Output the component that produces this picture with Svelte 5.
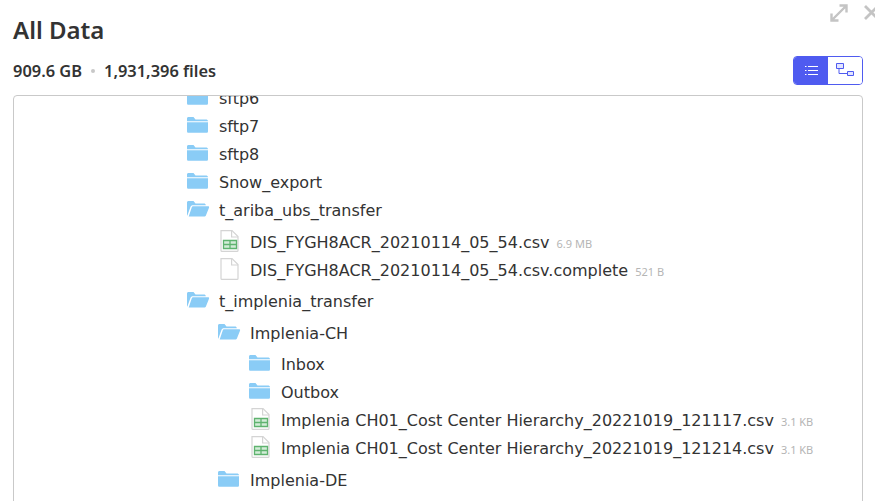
<script>
	const tree = [
		{ name: 'sftp6', type: 'folder' },
		{ name: 'sftp7', type: 'folder' },
		{ name: 'sftp8', type: 'folder' },
		{ name: 'Snow_export', type: 'folder' },
		{
			name: 't_ariba_ubs_transfer',
			type: 'open',
			children: [
				{ name: 'DIS_FYGH8ACR_20210114_05_54.csv', type: 'csv', size: '6.9 MB' },
				{ name: 'DIS_FYGH8ACR_20210114_05_54.csv.complete', type: 'file', size: '521 B' }
			]
		},
		{
			name: 't_implenia_transfer',
			type: 'open',
			children: [
				{
					name: 'Implenia-CH',
					type: 'open',
					children: [
						{ name: 'Inbox', type: 'folder' },
						{ name: 'Outbox', type: 'folder' },
						{ name: 'Implenia CH01_Cost Center Hierarchy_20221019_121117.csv', type: 'csv', size: '3.1 KB' },
						{ name: 'Implenia CH01_Cost Center Hierarchy_20221019_121214.csv', type: 'csv', size: '3.1 KB' }
					]
				},
				{ name: 'Implenia-DE', type: 'folder' }
			]
		}
	]
</script>

{#snippet icon(type)}
	{#if type === 'folder'}
		<svg class="ic" width="22" height="18" viewBox="0 0 22 18">
			<path fill="#8accf6" d="M1 1.500C1 .6 1.600 0 2.500 0H7.500L9.500 2.500H20C21 2.500 22 3 22 4.200H1Z" />
			<path fill="#8accf6" d="M1 5.300H22V14.200C22 15.200 21.400 15.800 20.500 15.800H2.500C1.600 15.800 1 15.200 1 14.200Z" />
		</svg>
	{:else if type === 'open'}
		<svg class="ic open" width="24" height="18" viewBox="0 0 24 18">
			<path fill="#8accf6" d="M1 1.500C1 .6 1.600 0 2.500 0H7.500L9.500 2.500H18C19 2.500 19.800 3 19.800 4.200H7C5.600 4.200 4.900 4.800 4.500 5.800L1.300 14.800C1.100 14.500 1 14.200 1 13.800Z" />
			<path fill="#8accf6" d="M5.800 6.300C6.100 5.600 6.500 5.300 7.300 5.300H22C23 5.300 23.400 5.900 23 6.700L20 14.200C19.600 15.200 19 15.600 18 15.600H2.700Z" />
		</svg>
	{:else}
		<svg class="ic" width="22" height="24" viewBox="0 0 22 24">
			<path fill="#fff" stroke="#d4d4d4" stroke-width="1.200" d="M4 .6H15L21 6.600V20.500C21 21 20.600 21.400 20 21.400H5C4.400 21.400 4 21 4 20.500Z" />
			<path fill="none" stroke="#d4d4d4" stroke-width="1.200" d="M14.600 .6V7H21" />
			{#if type === 'csv'}
				<path fill="#d3ecd8" stroke="#5fb36f" stroke-width="1.300" d="M6.500 10.500H19.500V18.500H6.500Z" />
				<path fill="none" stroke="#5fb36f" stroke-width="1.300" d="M13 10.500V18.500M6.500 14.500H19.500" />
			{/if}
		</svg>
	{/if}
{/snippet}

{#snippet nodes(items)}
	<ul>
		{#each items as item}
			<li>
				<div class="row">
					{@render icon(item.type)}
					<span class="name">{item.name}</span>
					{#if item.size}<span class="size">{item.size}</span>{/if}
				</div>
				{#if item.children}
					<div class="children">{@render nodes(item.children)}</div>
				{/if}
			</li>
		{/each}
	</ul>
{/snippet}

<div class="page">
	<div class="window-actions">
		<svg width="20" height="20" viewBox="0 0 20 20">
			<path fill="none" stroke="#c4c4c4" stroke-width="2.400" d="M2.500 17.500L17.500 2.500M10.500 2.500H17.500V9.500M2.500 10.500V17.500H9.500" />
		</svg>
		<svg width="16" height="20" viewBox="0 0 16 20">
			<path fill="none" stroke="#c4c4c4" stroke-width="2.800" d="M2 3L15 16M15 3L2 16" />
		</svg>
	</div>

	<h1>All Data</h1>

	<div class="summary">
		<div class="stats">
			<span>909.6 GB</span>
			<i class="dot"></i>
			<span>1,931,396 files</span>
		</div>
		<div class="toggle">
			<button class="active" aria-label="List view">
				<svg width="13" height="12" viewBox="0 0 13 12">
					<path fill="#fff" d="M0 1H1.500V2H0ZM3 1H13V2H3ZM0 5H1.500V6H0ZM3 5H13V6H3ZM0 9H1.500V10H0ZM3 9H13V10H3Z" />
				</svg>
			</button>
			<button aria-label="Tree view">
				<svg width="18" height="15" viewBox="0 0 18 15">
					<path fill="#e3e5ff" stroke="#4f5bf0" d="M0.500 0.500H7.500V5.500H0.500ZM11.500 8.500H17.500V12.500H11.500Z" />
					<path fill="none" stroke="#4f5bf0" d="M3 5.500V10.500H11.500" />
				</svg>
			</button>
		</div>
	</div>

	<div class="browser">
		<div class="tree">{@render nodes(tree)}</div>
	</div>
</div>

<style>
	:global(body) {
		overflow: hidden;
		background: #fff;
	}

	.page {
		position: relative;
		height: 501px;
		padding: 15px 12px 0 13px;
		box-sizing: border-box;
		overflow: hidden;
		font-family: "Noto Sans", sans-serif;
		color: #333;
	}

	.window-actions {
		position: absolute;
		top: 3px;
		right: -4px;
		display: flex;
		gap: 14px;
	}

	h1 {
		margin: 0;
		font-size: 24px;
		line-height: 30px;
		font-weight: 600;
	}

	.summary {
		display: flex;
		justify-content: space-between;
		align-items: center;
		margin-top: 11px;
		height: 29px;
	}

	.stats {
		display: flex;
		align-items: center;
		gap: 9px;
		font-size: 16.4px;
		font-weight: 600;
	}

	.dot {
		width: 4px;
		height: 4px;
		border-radius: 50%;
		background: #c8c8c8;
	}

	.toggle {
		display: flex;
		width: 70px;
		height: 29px;
		box-sizing: border-box;
		border: 1px solid #4f5bf0;
		border-radius: 4px;
		overflow: hidden;
	}

	.toggle button {
		flex: 1;
		display: flex;
		align-items: center;
		justify-content: center;
		padding: 0;
		border: none;
		background: #fff;
	}

	.toggle button.active {
		background: #4f5bf0;
	}

	.browser {
		margin-top: 10px;
		height: 420px;
		box-sizing: border-box;
		border: 1px solid #c9c9c9;
		border-radius: 4px;
		overflow: hidden;
	}

	.tree {
		margin-top: -12px;
		padding-left: 172px;
	}

	ul {
		list-style: none;
		margin: 0;
		padding: 0;
	}

	.row {
		display: flex;
		align-items: center;
		gap: 11px;
		height: 28px;
		white-space: nowrap;
		font-size: 16px;
		font-family: "DejaVu Sans", sans-serif;
	}

	.ic {
		flex: none;
	}

	.ic.open {
		margin-right: -2px;
	}

	.children {
		padding: 4px 0 3px 31px;
	}

	.children .children {
		padding: 3px 0 4px 31px;
	}

	.size {
		font-size: 11px;
		color: #b5b5b5;
		margin-left: -4px;
		padding-top: 3px;
		font-family: "Noto Sans", sans-serif;
	}
</style>
